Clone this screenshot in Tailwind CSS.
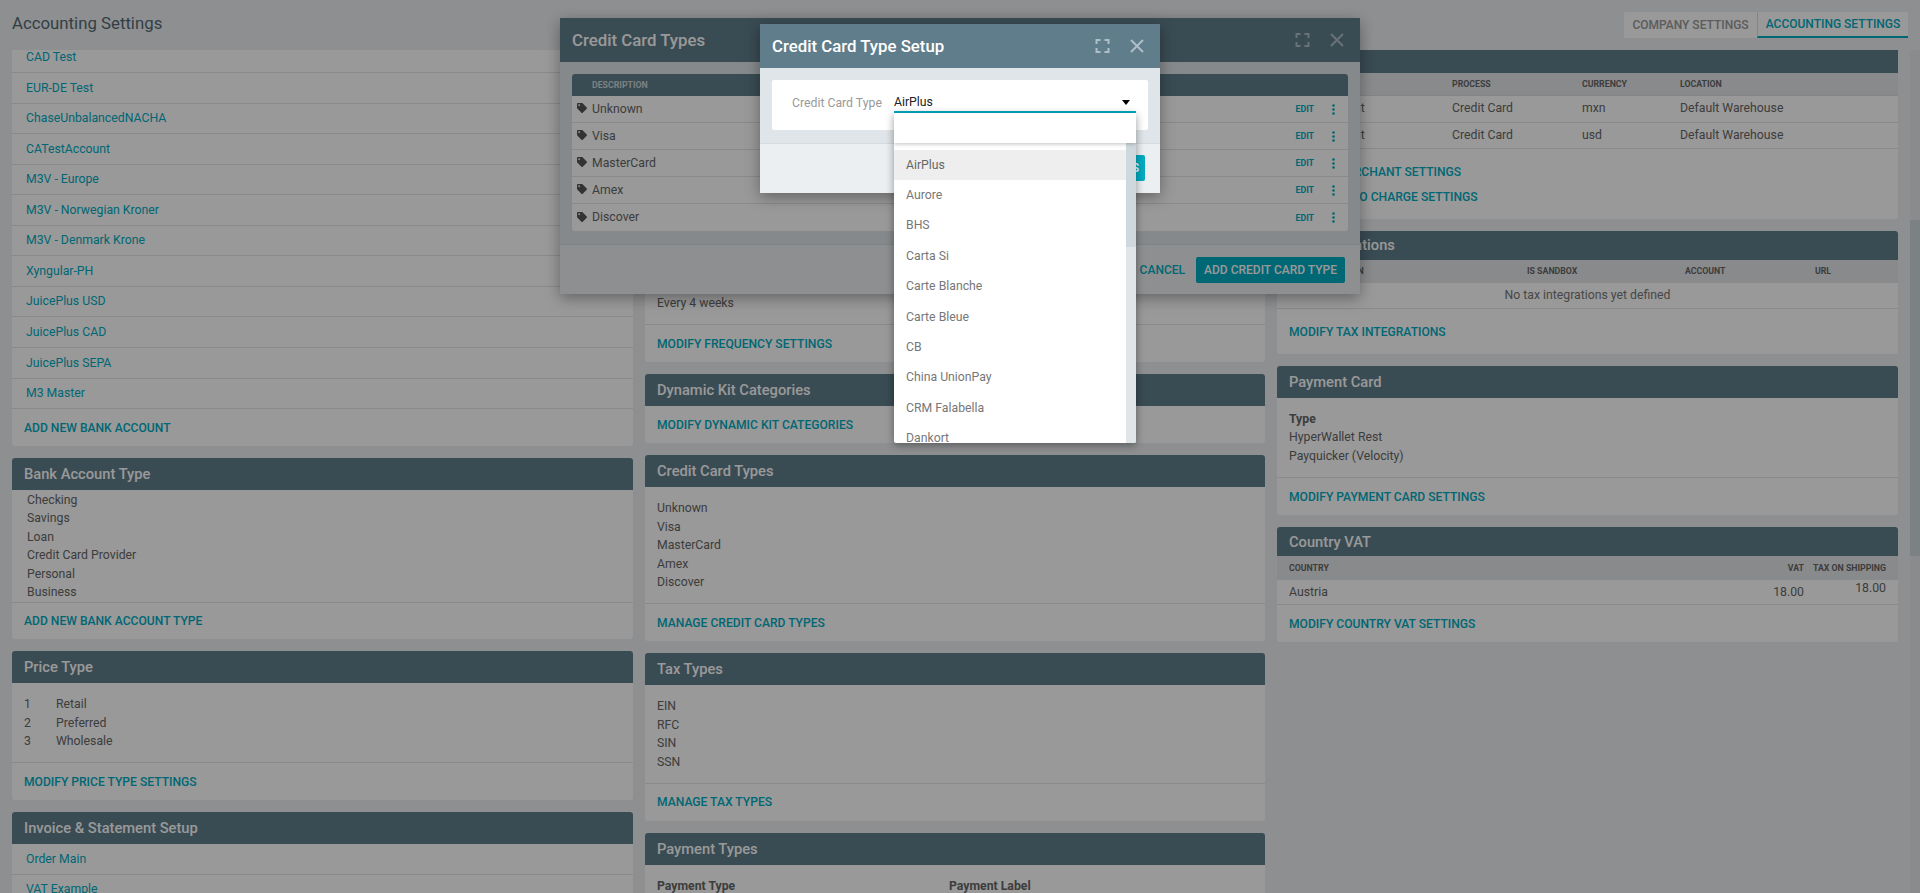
<!doctype html>
<html lang="en">
<head>
<meta charset="UTF-8" />
<title>Accounting Settings</title>
<script src="https://cdn.jsdelivr.net/npm/@tailwindcss/browser@4"></script>
</head>
<body class="relative w-[1920px] h-[893px] overflow-hidden bg-[#eceff1] text-[12.25px] text-[#666] [font-family:Roboto,sans-serif]">
  <!-- page header -->
  <header class="flex justify-between h-[50px] pl-3 pr-3">
    <h1 class="pt-[12px] text-[16.8px] leading-[23px] font-normal text-[#566a74]">Accounting Settings</h1>
    <div class="flex pt-[12px] h-[38px] box-content text-[12px] font-medium">
      <a class="w-[133px] h-[26px] flex items-center justify-center bg-white rounded-tl-[2px] text-[#999]">COMPANY SETTINGS</a>
      <a class="w-[151px] h-[26px] flex items-center justify-center bg-white border-l border-[#ddd] border-b-2 border-b-[#00acc1] text-[#00acc1]">ACCOUNTING SETTINGS</a>
    </div>
  </header>

  <main class="flex h-[843px] pl-3">
    <!-- column 1 -->
    <div class="w-[621px] h-full overflow-hidden">
      <section class="-mt-[7.5px] bg-white rounded-[3px]">
        <a class="flex items-center h-[30.55px] pl-[14px] border-b border-[#e4e4e4] text-[#00acc1]">CAD Test</a>
        <a class="flex items-center h-[30.55px] pl-[14px] border-b border-[#e4e4e4] text-[#00acc1]">EUR-DE Test</a>
        <a class="flex items-center h-[30.55px] pl-[14px] border-b border-[#e4e4e4] text-[#00acc1]">ChaseUnbalancedNACHA</a>
        <a class="flex items-center h-[30.55px] pl-[14px] border-b border-[#e4e4e4] text-[#00acc1]">CATestAccount</a>
        <a class="flex items-center h-[30.55px] pl-[14px] border-b border-[#e4e4e4] text-[#00acc1]">M3V - Europe</a>
        <a class="flex items-center h-[30.55px] pl-[14px] border-b border-[#e4e4e4] text-[#00acc1]">M3V - Norwegian Kroner</a>
        <a class="flex items-center h-[30.55px] pl-[14px] border-b border-[#e4e4e4] text-[#00acc1]">M3V - Denmark Krone</a>
        <a class="flex items-center h-[30.55px] pl-[14px] border-b border-[#e4e4e4] text-[#00acc1]">Xyngular-PH</a>
        <a class="flex items-center h-[30.55px] pl-[14px] border-b border-[#e4e4e4] text-[#00acc1]">JuicePlus USD</a>
        <a class="flex items-center h-[30.55px] pl-[14px] border-b border-[#e4e4e4] text-[#00acc1]">JuicePlus CAD</a>
        <a class="flex items-center h-[30.55px] pl-[14px] border-b border-[#e4e4e4] text-[#00acc1]">JuicePlus SEPA</a>
        <a class="flex items-center h-[30.55px] pl-[14px] border-b border-[#e4e4e4] text-[#00acc1]">M3 Master</a>
        <div class="flex items-center h-[37px] pl-3 pt-[2px] text-[12.1px] font-medium text-[#00acc1]">ADD NEW BANK ACCOUNT</div>
      </section>

      <section class="mt-3 bg-white rounded-[3px]">
        <h2 class="flex items-center h-[32px] px-3 bg-[#607d8b] rounded-t-[3px] text-[14.7px] font-medium text-white">Bank Account Type</h2>
        <ul class="pt-px pl-[15px] leading-[18.4px]">
          <li>Checking</li><li>Savings</li><li>Loan</li><li>Credit Card Provider</li><li>Personal</li><li>Business</li>
        </ul>
        <div class="flex items-center h-[37.6px] pl-3 border-t border-[#e4e4e4] text-[12.1px] font-medium text-[#00acc1]">ADD NEW BANK ACCOUNT TYPE</div>
      </section>

      <section class="mt-3 bg-white rounded-[3px]">
        <h2 class="flex items-center h-[32px] px-3 bg-[#607d8b] rounded-t-[3px] text-[14.7px] font-medium text-white">Price Type</h2>
        <div class="py-3 px-3 grid grid-cols-[32px_1fr] leading-[18.4px]">
          <span>1</span><span>Retail</span><span>2</span><span>Preferred</span><span>3</span><span>Wholesale</span>
        </div>
        <div class="flex items-center h-[37.8px] pl-3 border-t border-[#e4e4e4] text-[12.1px] font-medium text-[#00acc1]">MODIFY PRICE TYPE SETTINGS</div>
      </section>

      <section class="mt-3 bg-white rounded-[3px]">
        <h2 class="flex items-center h-[32px] px-3 bg-[#607d8b] rounded-t-[3px] text-[14.7px] font-medium text-white">Invoice &amp; Statement Setup</h2>
        <a class="flex items-center h-[30.55px] pl-[14px] border-b border-[#e4e4e4] text-[#00acc1]">Order Main</a>
        <a class="flex items-center h-[30.55px] pl-[14px] border-b border-[#e4e4e4] text-[#00acc1]">VAT Example</a>
      </section>
    </div>

    <!-- column 2 -->
    <div class="w-[620px] ml-3 h-full overflow-hidden">
      <section class="-mt-[2.6px] bg-white rounded-[3px]">
        <h2 class="flex items-center h-[32px] px-3 bg-[#607d8b] rounded-t-[3px] text-[14.7px] font-medium text-white">Frequency</h2>
        <ul class="py-3 px-3 leading-[18.4px]">
          <li>Daily</li><li>Weekly</li><li>Every 2 weeks</li><li>Monthly</li><li>Every 2 months</li><li>Every 3 months</li><li>Every 6 months</li><li>Yearly</li><li>Twice a month</li><li>Every 3 weeks</li><li>Quarterly</li><li>Every 4 weeks</li>
        </ul>
        <div class="flex items-center h-[38px] pl-3 border-t border-[#e4e4e4] text-[12.1px] font-medium text-[#00acc1]">MODIFY FREQUENCY SETTINGS</div>
      </section>

      <section class="mt-3 bg-white rounded-[3px]">
        <h2 class="flex items-center h-[32px] px-3 bg-[#607d8b] rounded-t-[3px] text-[14.7px] font-medium text-white">Dynamic Kit Categories</h2>
        <div class="flex items-center h-[37px] pl-3 text-[12.1px] font-medium text-[#00acc1]">MODIFY DYNAMIC KIT CATEGORIES</div>
      </section>

      <section class="mt-3 bg-white rounded-[3px]">
        <h2 class="flex items-center h-[32px] px-3 bg-[#607d8b] rounded-t-[3px] text-[14.7px] font-medium text-white">Credit Card Types</h2>
        <ul class="py-3 px-3 leading-[18.4px]">
          <li>Unknown</li><li>Visa</li><li>MasterCard</li><li>Amex</li><li>Discover</li>
        </ul>
        <div class="flex items-center h-[38px] pl-3 border-t border-[#e4e4e4] text-[12.1px] font-medium text-[#00acc1]">MANAGE CREDIT CARD TYPES</div>
      </section>

      <section class="mt-3 bg-white rounded-[3px]">
        <h2 class="flex items-center h-[32px] px-3 bg-[#607d8b] rounded-t-[3px] text-[14.7px] font-medium text-white">Tax Types</h2>
        <ul class="py-3 px-3 leading-[18.4px]">
          <li>EIN</li><li>RFC</li><li>SIN</li><li>SSN</li>
        </ul>
        <div class="flex items-center h-[38px] pl-3 border-t border-[#e4e4e4] text-[12.1px] font-medium text-[#00acc1]">MANAGE TAX TYPES</div>
      </section>

      <section class="mt-3 bg-white rounded-[3px]">
        <h2 class="flex items-center h-[32px] px-3 bg-[#607d8b] rounded-t-[3px] text-[14.7px] font-medium text-white">Payment Types</h2>
        <div class="pt-3 px-3 grid grid-cols-[292px_1fr] leading-[18.4px] font-bold">
          <span>Payment Type</span><span>Payment Label</span>
        </div>
      </section>
    </div>

    <!-- column 3 -->
    <div class="w-[621px] ml-3 h-full overflow-hidden">
      <section class="-mt-[9px] bg-white rounded-[3px]">
        <h2 class="flex items-center h-[32px] px-3 bg-[#607d8b] rounded-t-[3px] text-[14.7px] font-medium text-white">Merchant</h2>
        <div class="grid grid-cols-[163px_130px_98px_1fr] items-center h-[22.5px] px-3 pt-[2px] bg-[#e4e7ea] border-b border-[#dcdcdc] text-[8.75px] font-bold text-[#666]">
          <span>ACCOUNT</span><span>PROCESS</span><span>CURRENCY</span><span>LOCATION</span>
        </div>
        <div class="grid grid-cols-[163px_130px_98px_1fr] items-center h-[27px] px-3 border-b border-[#e4e4e4]">
          <span>Bank Account</span><span>Credit Card</span><span>mxn</span><span>Default Warehouse</span>
        </div>
        <div class="grid grid-cols-[163px_130px_98px_1fr] items-center h-[26px] px-3 border-b border-[#e4e4e4]">
          <span>Bank Account</span><span>Credit Card</span><span>usd</span><span>Default Warehouse</span>
        </div>
        <div class="h-[70.5px] pl-3 pt-[11px] leading-[25px] text-[12.1px] font-medium text-[#00acc1]">
          <div>MODIFY MERCHANT SETTINGS</div>
          <div>MODIFY AUTO CHARGE SETTINGS</div>
        </div>
      </section>

      <section class="mt-3 bg-white rounded-[3px]">
        <h2 class="flex items-center h-[29px] px-3 bg-[#607d8b] rounded-t-[3px] text-[14.7px] font-medium text-white">Tax Integrations</h2>
        <div class="grid grid-cols-[238px_158px_130px_1fr] items-center h-[22.5px] px-3 pt-px bg-[#e4e7ea] text-[8.75px] font-bold text-[#666]">
          <span>TAX INTEGRATION</span><span>IS SANDBOX</span><span>ACCOUNT</span><span>URL</span>
        </div>
        <div class="flex items-center justify-center h-[26px] border-b border-[#e4e4e4] text-[#777]">No tax integrations yet defined</div>
        <div class="flex items-center h-[45.5px] pl-3 pt-[2px] text-[12.1px] font-medium text-[#00acc1]">MODIFY TAX INTEGRATIONS</div>
      </section>

      <section class="mt-3 bg-white rounded-[3px]">
        <h2 class="flex items-center h-[32px] px-3 bg-[#607d8b] rounded-t-[3px] text-[14.7px] font-medium text-white">Payment Card</h2>
        <div class="py-3 px-3 leading-[18.4px]">
          <div class="font-bold">Type</div>
          <div>HyperWallet Rest</div>
          <div>Payquicker (Velocity)</div>
        </div>
        <div class="flex items-center h-[38px] pl-3 border-t border-[#e4e4e4] text-[12.1px] font-medium text-[#00acc1]">MODIFY PAYMENT CARD SETTINGS</div>
      </section>

      <section class="mt-3 bg-white rounded-[3px]">
        <h2 class="flex items-center h-[29px] px-3 bg-[#607d8b] rounded-t-[3px] text-[14.7px] font-medium text-white">Country VAT</h2>
        <div class="flex items-center h-[24px] px-3 bg-[#e4e7ea] text-[8.75px] font-bold text-[#666] whitespace-nowrap">
          <span class="flex-1">COUNTRY</span><span>VAT</span><span class="w-[82px] text-right">TAX ON SHIPPING</span>
        </div>
        <div class="flex items-center h-[25px] px-3 border-b border-[#e4e4e4]">
          <span class="flex-1">Austria</span><span>18.00</span><span class="w-[82px] text-right -mt-2">18.00</span>
        </div>
        <div class="flex items-center h-[37px] pl-3 text-[12.1px] font-medium text-[#00acc1]">MODIFY COUNTRY VAT SETTINGS</div>
      </section>
    </div>

    <!-- page scrollbar -->
    <div class="ml-3 w-[10px] h-full pt-[170px] bg-[#e4e8ea]">
      <div class="h-[336px] bg-[#cfd8dc]"></div>
    </div>
  </main>

  <!-- first dialog -->
  <div class="absolute left-[560px] top-[18px] w-[800px] h-[276px] bg-[#dfe5e8] shadow-[0_4px_14px_rgba(0,0,0,0.35)]">
    <div class="flex items-center h-[44px] pl-3 bg-[#607d8b]">
      <h3 class="flex-1 pt-[2px] text-[16.8px] font-medium text-white">Credit Card Types</h3>
      <svg class="w-[15px] h-[14px] mr-[20px] text-[#aebfc8]" viewBox="5 5 14 14" fill="currentColor"><path d="M7 14H5v5h5v-2H7v-3zm-2-4h2V7h3V5H5v5zm12 7h-3v2h5v-5h-2v3zM14 5v2h3v3h2V5h-5z"/></svg>
      <svg class="w-[14px] h-[14px] mr-[16px] text-[#aebfc8]" viewBox="0 0 14 14" stroke="currentColor" stroke-width="2" fill="none"><path d="M1 1l12 12M13 1L1 13"/></svg>
    </div>
    <div class="mx-3 mt-3 bg-white rounded-[3px]">
      <div class="flex items-center h-[22px] pl-[20px] pt-[2px] bg-[#607d8b] rounded-t-[3px] text-[8.75px] font-bold text-[#cfd8dc]">DESCRIPTION</div>
      <div class="flex items-center h-[27px] pl-[5px] border-b border-[#e4e4e4]">
        <svg class="w-[10px] h-[10px] mr-[5px] -mt-[2px] text-[#555]" viewBox="0 0 512 512" fill="currentColor"><path fill-rule="evenodd" d="M0 252.118V48C0 21.49 21.49 0 48 0h204.118a48 48 0 0 1 33.941 14.059l211.882 211.882c18.745 18.745 18.745 49.137 0 67.882L293.823 497.941c-18.745 18.745-49.137 18.745-67.882 0L14.059 286.059A48 48 0 0 1 0 252.118zM112 64c-26.51 0-48 21.49-48 48s21.49 48 48 48 48-21.49 48-48-21.49-48-48-48z"/></svg>
        <span class="flex-1">Unknown</span><span class="mr-[18px] mt-[2px] text-[8.75px] font-bold text-[#00acc1]">EDIT</span>
        <svg class="w-[3px] h-[11px] mr-[13px] text-[#00acc1]" viewBox="0 0 3 11" fill="currentColor"><circle cx="1.5" cy="1.5" r="1.3"/><circle cx="1.5" cy="5.5" r="1.3"/><circle cx="1.5" cy="9.5" r="1.3"/></svg>
      </div>
      <div class="flex items-center h-[27px] pl-[5px] border-b border-[#e4e4e4]">
        <svg class="w-[10px] h-[10px] mr-[5px] -mt-[2px] text-[#555]" viewBox="0 0 512 512" fill="currentColor"><path fill-rule="evenodd" d="M0 252.118V48C0 21.49 21.49 0 48 0h204.118a48 48 0 0 1 33.941 14.059l211.882 211.882c18.745 18.745 18.745 49.137 0 67.882L293.823 497.941c-18.745 18.745-49.137 18.745-67.882 0L14.059 286.059A48 48 0 0 1 0 252.118zM112 64c-26.51 0-48 21.49-48 48s21.49 48 48 48 48-21.49 48-48-21.49-48-48-48z"/></svg>
        <span class="flex-1">Visa</span><span class="mr-[18px] mt-[2px] text-[8.75px] font-bold text-[#00acc1]">EDIT</span>
        <svg class="w-[3px] h-[11px] mr-[13px] text-[#00acc1]" viewBox="0 0 3 11" fill="currentColor"><circle cx="1.5" cy="1.5" r="1.3"/><circle cx="1.5" cy="5.5" r="1.3"/><circle cx="1.5" cy="9.5" r="1.3"/></svg>
      </div>
      <div class="flex items-center h-[27px] pl-[5px] border-b border-[#e4e4e4]">
        <svg class="w-[10px] h-[10px] mr-[5px] -mt-[2px] text-[#555]" viewBox="0 0 512 512" fill="currentColor"><path fill-rule="evenodd" d="M0 252.118V48C0 21.49 21.49 0 48 0h204.118a48 48 0 0 1 33.941 14.059l211.882 211.882c18.745 18.745 18.745 49.137 0 67.882L293.823 497.941c-18.745 18.745-49.137 18.745-67.882 0L14.059 286.059A48 48 0 0 1 0 252.118zM112 64c-26.51 0-48 21.49-48 48s21.49 48 48 48 48-21.49 48-48-21.49-48-48-48z"/></svg>
        <span class="flex-1">MasterCard</span><span class="mr-[18px] mt-[2px] text-[8.75px] font-bold text-[#00acc1]">EDIT</span>
        <svg class="w-[3px] h-[11px] mr-[13px] text-[#00acc1]" viewBox="0 0 3 11" fill="currentColor"><circle cx="1.5" cy="1.5" r="1.3"/><circle cx="1.5" cy="5.5" r="1.3"/><circle cx="1.5" cy="9.5" r="1.3"/></svg>
      </div>
      <div class="flex items-center h-[27px] pl-[5px] border-b border-[#e4e4e4]">
        <svg class="w-[10px] h-[10px] mr-[5px] -mt-[2px] text-[#555]" viewBox="0 0 512 512" fill="currentColor"><path fill-rule="evenodd" d="M0 252.118V48C0 21.49 21.49 0 48 0h204.118a48 48 0 0 1 33.941 14.059l211.882 211.882c18.745 18.745 18.745 49.137 0 67.882L293.823 497.941c-18.745 18.745-49.137 18.745-67.882 0L14.059 286.059A48 48 0 0 1 0 252.118zM112 64c-26.51 0-48 21.49-48 48s21.49 48 48 48 48-21.49 48-48-21.49-48-48-48z"/></svg>
        <span class="flex-1">Amex</span><span class="mr-[18px] mt-[2px] text-[8.75px] font-bold text-[#00acc1]">EDIT</span>
        <svg class="w-[3px] h-[11px] mr-[13px] text-[#00acc1]" viewBox="0 0 3 11" fill="currentColor"><circle cx="1.5" cy="1.5" r="1.3"/><circle cx="1.5" cy="5.5" r="1.3"/><circle cx="1.5" cy="9.5" r="1.3"/></svg>
      </div>
      <div class="flex items-center h-[27px] pl-[5px] rounded-b-[3px]">
        <svg class="w-[10px] h-[10px] mr-[5px] -mt-[2px] text-[#555]" viewBox="0 0 512 512" fill="currentColor"><path fill-rule="evenodd" d="M0 252.118V48C0 21.49 21.49 0 48 0h204.118a48 48 0 0 1 33.941 14.059l211.882 211.882c18.745 18.745 18.745 49.137 0 67.882L293.823 497.941c-18.745 18.745-49.137 18.745-67.882 0L14.059 286.059A48 48 0 0 1 0 252.118zM112 64c-26.51 0-48 21.49-48 48s21.49 48 48 48 48-21.49 48-48-21.49-48-48-48z"/></svg>
        <span class="flex-1">Discover</span><span class="mr-[18px] mt-[2px] text-[8.75px] font-bold text-[#00acc1]">EDIT</span>
        <svg class="w-[3px] h-[11px] mr-[13px] text-[#00acc1]" viewBox="0 0 3 11" fill="currentColor"><circle cx="1.5" cy="1.5" r="1.3"/><circle cx="1.5" cy="5.5" r="1.3"/><circle cx="1.5" cy="9.5" r="1.3"/></svg>
      </div>
    </div>
    <div class="flex items-center justify-end absolute left-0 right-0 bottom-0 h-[50px] pr-[15px] bg-[#eceff1] border-t border-[#d5dbde]">
      <span class="mr-[11px] text-[12px] font-medium text-[#00acc1]">CANCEL</span>
      <span class="flex items-center justify-center w-[149px] h-[26px] rounded-[2px] bg-[#00acc1] text-[12px] font-medium text-white">ADD CREDIT CARD TYPE</span>
    </div>
  </div>

  <!-- dim layer between the dialogs -->
  <div class="absolute inset-0 bg-black/40"></div>

  <!-- second dialog -->
  <div class="absolute left-[760px] top-[24px] w-[400px] h-[168.5px] bg-[#dfe5e8] shadow-[0_4px_14px_rgba(0,0,0,0.35)]">
    <div class="flex items-center h-[44px] pl-3 bg-[#607d8b]">
      <h3 class="flex-1 pt-[2px] text-[16.8px] font-medium text-white">Credit Card Type Setup</h3>
      <svg class="w-[15px] h-[14px] mr-[20px] text-[#aebfc8]" viewBox="5 5 14 14" fill="currentColor"><path d="M7 14H5v5h5v-2H7v-3zm-2-4h2V7h3V5H5v5zm12 7h-3v2h5v-5h-2v3zM14 5v2h3v3h2V5h-5z"/></svg>
      <svg class="w-[14px] h-[14px] mr-[16px] text-[#aebfc8]" viewBox="0 0 14 14" stroke="currentColor" stroke-width="2" fill="none"><path d="M1 1l12 12M13 1L1 13"/></svg>
    </div>
    <div class="flex items-start h-[50px] mx-3 mt-3 pl-[20px] pr-3 bg-white rounded-[2px]">
      <label class="w-[102px] pt-[15px] leading-[16px] text-[#999]">Credit Card Type</label>
      <div class="relative flex-1 h-[33px] pt-[14px] border-b-2 border-[#00acc1] leading-[16px] text-[#222]">
        AirPlus
        <svg class="absolute right-[6px] top-[20px] w-[8px] h-[5px] text-black" viewBox="0 0 8 5" fill="currentColor"><polygon points="0,0 8,0 4,5"/></svg>
        <!-- open dropdown -->
        <div class="absolute left-0 right-0 top-[33px] h-[330px] z-10 bg-white rounded-b-[2px] shadow-[0_2px_8px_rgba(0,0,0,0.4)] overflow-hidden">
          <div class="h-[30px] bg-white shadow-[0_1px_4px_rgba(0,0,0,0.25)] relative"></div>
          <div class="flex h-[300px]">
            <ul class="flex-1 pt-[6.5px] leading-[30.4px] text-[#777] overflow-hidden">
              <li class="pl-3 bg-[#eee] text-[#666]">AirPlus</li>
              <li class="pl-3">Aurore</li>
              <li class="pl-3">BHS</li>
              <li class="pl-3">Carta Si</li>
              <li class="pl-3">Carte Blanche</li>
              <li class="pl-3">Carte Bleue</li>
              <li class="pl-3">CB</li>
              <li class="pl-3">China UnionPay</li>
              <li class="pl-3">CRM Falabella</li>
              <li class="pl-3">Dankort</li>
            </ul>
            <div class="w-[10px] bg-[#dfe5e8]"><div class="h-[104px] bg-[#cfd8dc]"></div></div>
          </div>
        </div>
      </div>
    </div>
    <div class="flex items-center justify-end absolute left-0 right-0 bottom-0 h-[50px] pr-[15px] bg-[#eceff1] border-t border-[#d5dbde]">
      <span class="flex items-center justify-center h-[26px] px-[6px] rounded-[2px] bg-[#00acc1] text-[12px] font-medium text-white">SAVE CHANGES</span>
    </div>
  </div>
</body>
</html>
